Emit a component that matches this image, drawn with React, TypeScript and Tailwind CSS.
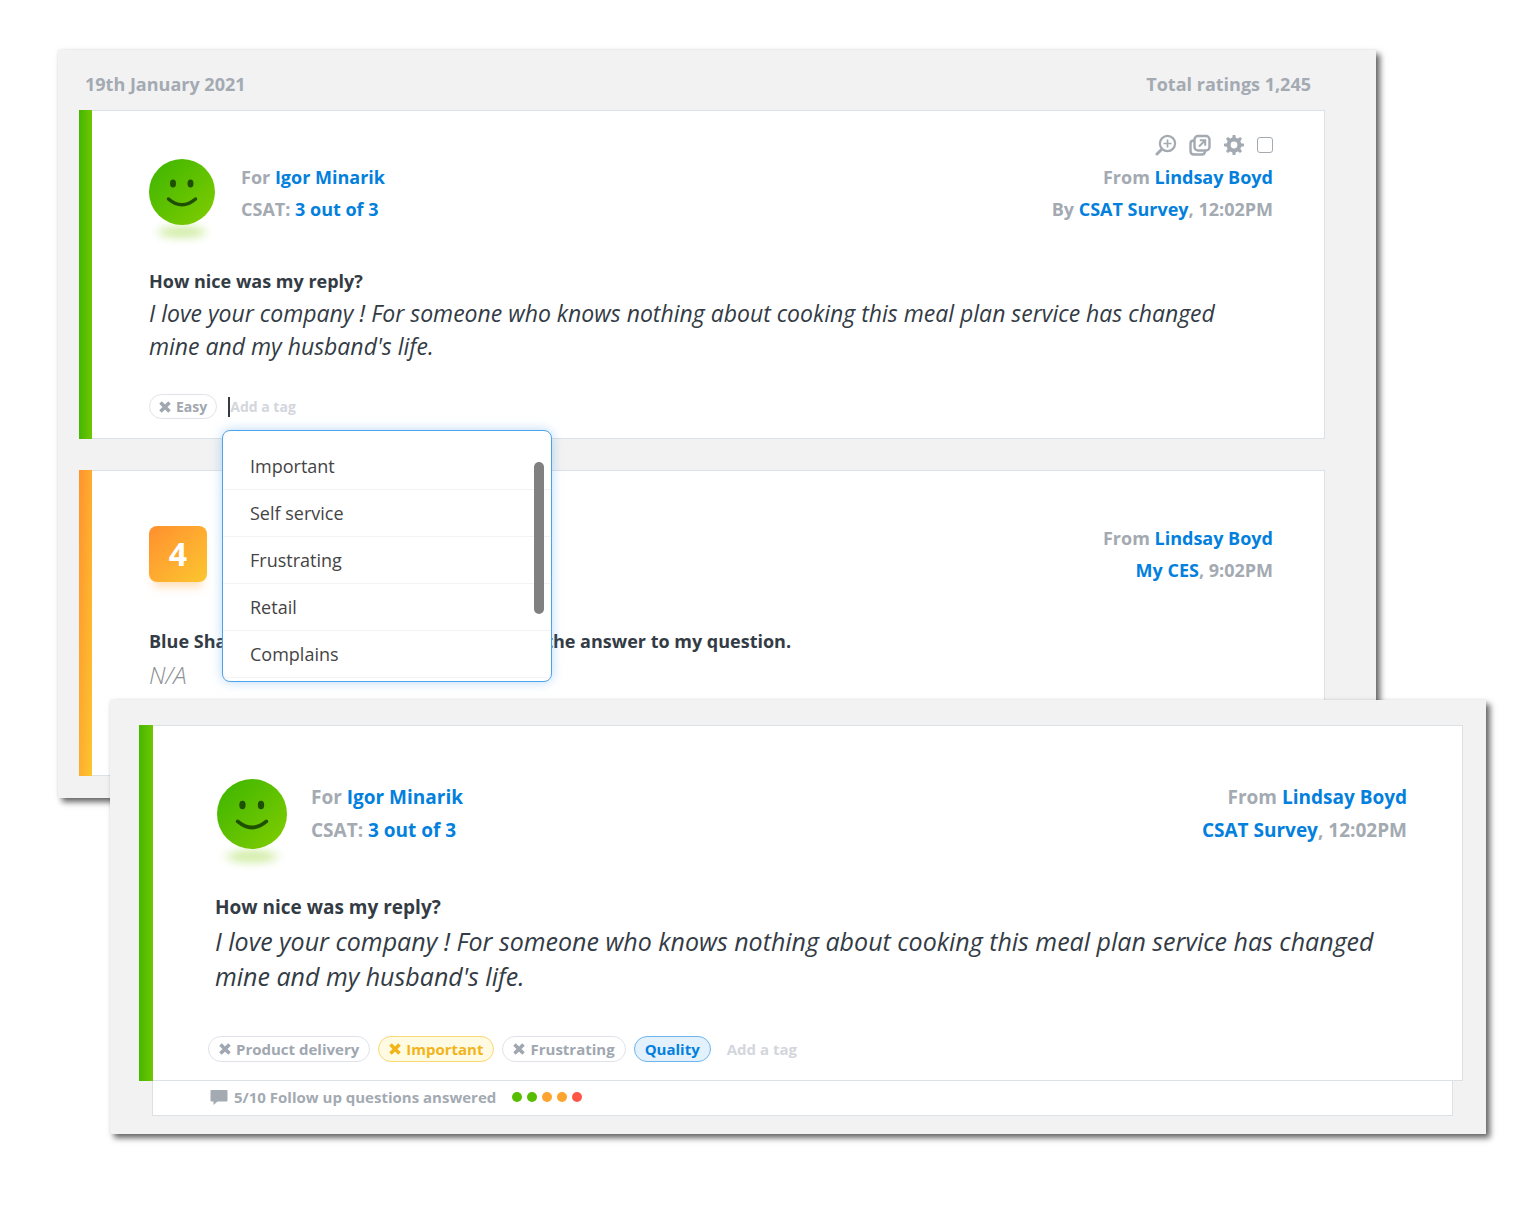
import type { ReactNode } from "react"
import clsx from "clsx"

const suggestions = ["Important", "Self service", "Frustrating", "Retail", "Complains"]

function Smiley({ id, className }: { id: string; className?: string }) {
  return (
    <svg viewBox="0 0 66 66" className={clsx("shrink-0 overflow-visible", className)} role="img" aria-label="Happy">
      <defs>
        <linearGradient id={id} x1="0.1" y1="0.1" x2="0.9" y2="0.9">
          <stop offset="0" stopColor="#43b700" />
          <stop offset="1" stopColor="#7bcb00" />
        </linearGradient>
        <filter id={`${id}-blur`} x="-50%" y="-150%" width="200%" height="400%">
          <feGaussianBlur stdDeviation="5 4" />
        </filter>
      </defs>
      <ellipse cx="33" cy="73" rx="24" ry="6" fill="#7bcb00" opacity="0.34" filter={`url(#${id}-blur)`} />
      <circle cx="33" cy="33" r="33" fill={`url(#${id})`} />
      <ellipse cx="24" cy="24.500" rx="3" ry="4" fill="#1f4f00" />
      <ellipse cx="41.500" cy="24.500" rx="3" ry="4" fill="#1f4f00" />
      <path d="M19.500 40 Q33 51.500 46.500 40" fill="none" stroke="#1f4f00" strokeWidth="3.500" strokeLinecap="round" />
    </svg>
  )
}

function ZoomIcon() {
  return (
    <svg viewBox="0 0 22 22" className="size-[22px]" fill="none" stroke="currentColor">
      <circle cx="12.500" cy="9.500" r="7.600" strokeWidth="2.200" />
      <path d="M12.500 5.500v8M8.500 9.500h8" strokeWidth="1.700" />
      <path d="M6.500 15.500L2 20" strokeWidth="3" strokeLinecap="round" />
    </svg>
  )
}

function OpenIcon() {
  return (
    <svg viewBox="0 0 22 22" className="size-[22px]" fill="none" stroke="currentColor" strokeWidth="2.400">
      <rect x="5.500" y="2" width="15" height="14.500" rx="3.500" />
      <path d="M5 6.500C2.500 6.500 1.500 7.500 1.500 9.500V17c0 2.200 1.300 3.500 3.500 3.500h8c2 0 3-1.300 3-3.500" />
      <path d="M10 12.500L15.500 7M10.800 6.300h5.400v5.400" strokeWidth="2" />
    </svg>
  )
}

function GearIcon() {
  return (
    <svg viewBox="0 0 22 22" className="size-[22px]" fill="currentColor">
      <circle cx="11" cy="11" r="5.400" fill="none" stroke="currentColor" strokeWidth="4" />
      {[0, 45, 90, 135, 180, 225, 270, 315].map((angle) => (
        <path key={angle} d="M9 5L9.700 1h2.600L13 5z" transform={`rotate(${angle} 11 11)`} />
      ))}
    </svg>
  )
}

function CrossIcon() {
  return (
    <svg viewBox="0 0 12 12" className="size-3" fill="none" stroke="currentColor" strokeWidth="3.600">
      <path d="M1.500 1.500L10.500 10.500M10.500 1.500L1.500 10.500" />
    </svg>
  )
}

function CommentIcon() {
  return (
    <svg viewBox="0 0 18 16" className="h-4 w-[18px]" fill="currentColor">
      <path d="M1.500 1h15a1 1 0 0 1 1 1v9.500a1 1 0 0 1-1 1H7.500L3.500 16v-3.500h-2a1 1 0 0 1-1-1V2a1 1 0 0 1 1-1z" />
    </svg>
  )
}

function Tag({ children, tone = "gray", large, removable = true }: { children: ReactNode; tone?: "gray" | "yellow" | "blue"; large?: boolean; removable?: boolean }) {
  return (
    <button
      type="button"
      className={clsx(
        "flex items-center gap-[5px] rounded-full border font-bold",
        large ? "h-[26px] px-[10px] text-[15px]" : "h-[25px] px-[9px] text-sm",
        tone === "gray" && "border-[#dfe3e9] bg-white text-[#a0a7b0]",
        tone === "yellow" && "border-[#fad873] bg-[#fffbe3] text-[#f2b41b]",
        tone === "blue" && "border-[#6db5ee] bg-[#e2f1fc] text-[#0380dd]",
      )}
    >
      {removable && <CrossIcon />}
      {children}
    </button>
  )
}

function Link({ children }: { children: ReactNode }) {
  return (
    <a href="#" className="text-[#0380dd]">
      {children}
    </a>
  )
}

export default function App() {
  return (
    <main className="bg-white pt-[50px] pb-[98px] font-['Open_Sans',sans-serif] text-[#333b45]">
      <section className="mr-[148px] ml-[58px] bg-[#f2f2f2] pr-[51px] pb-[22px] pl-[21px] shadow-[4px_4px_6px_rgba(0,0,0,0.6),0_0_3px_rgba(0,0,0,0.08)]">
        <header className="flex h-[60px] items-center justify-between pt-2 pr-[14px] pl-[6px] text-lg font-bold text-[#a3aab2]">
          <h2>19th January 2021</h2>
          <p>Total ratings 1,245</p>
        </header>

        <article className="flex border-y border-r border-[#dce1e6] bg-white">
          <div className="-my-px w-[13px] shrink-0 bg-linear-to-r from-[#43b700] to-[#6fc600]" />
          <div className="flex-1 pt-[23px] pr-[51px] pb-[19px] pl-[57px]">
            <div className="flex items-end justify-between text-lg leading-8 font-bold text-[#a3aab2]">
              <div className="flex items-end gap-[26px]">
                <Smiley id="smiley-main" className="size-[66px]" />
                <div>
                  <p>For <Link>Igor Minarik</Link></p>
                  <p>CSAT: <Link>3 out of 3</Link></p>
                </div>
              </div>
              <div className="text-right">
                <div className="mb-[5px] flex items-center justify-end gap-3">
                  <button type="button" aria-label="Zoom in"><ZoomIcon /></button>
                  <button type="button" aria-label="Open"><OpenIcon /></button>
                  <button type="button" aria-label="Settings"><GearIcon /></button>
                  <input type="checkbox" aria-label="Select rating" className="size-4 appearance-none rounded-[3px] border border-[#a3aab2]" />
                </div>
                <p>From <Link>Lindsay Boyd</Link></p>
                <p>By <Link>CSAT Survey</Link>, 12:02PM</p>
              </div>
            </div>

            <h3 className="mt-11 text-lg leading-6 font-bold">How nice was my reply?</h3>
            <p className="mt-1 pr-8 text-[23px] leading-[33px] italic">
              I love your company ! For someone who knows nothing about cooking this meal plan service has changed mine and my husband's life.
            </p>

            <div className="relative mt-[31px] flex items-center gap-[11px]">
              <Tag>Easy</Tag>
              <input
                aria-label="Tag"
                placeholder="Add a tag"
                className="h-5 w-40 border-l-2 border-[#333b45] text-sm font-bold outline-none placeholder:text-[#d3d6dc]"
              />
              <ul className="absolute top-9 left-[73px] z-10 h-[252px] w-[330px] overflow-hidden rounded-lg border border-[#4fa3ea] bg-white pt-3 text-lg text-[#444] shadow-[0_0_12px_rgba(80,160,235,0.4)]">
                {suggestions.map((name) => (
                  <li key={name} className="border-b border-[#f2f3f4] last:border-0">
                    <button type="button" className="block h-[46px] w-full pl-[27px] text-left">{name}</button>
                  </li>
                ))}
                <li aria-hidden="true" className="absolute top-[31px] right-[7px] h-[152px] w-[10px] rounded-full bg-[#808080]" />
              </ul>
            </div>
          </div>
        </article>

        <article className="mt-[31px] flex border-y border-r border-[#dce1e6] bg-white">
          <div className="-my-px w-[13px] shrink-0 bg-linear-to-br from-[#ff922e] to-[#fbc62f]" />
          <div className="flex-1 pt-[51px] pr-[51px] pb-[84px] pl-[57px]">
            <div className="flex items-center justify-between text-lg leading-8 font-bold text-[#a3aab2]">
              <div className="flex h-14 w-[58px] items-center justify-center rounded-lg bg-linear-to-br from-[#ff8f2f] to-[#fbc62f] text-[32px] font-bold text-white shadow-[0_10px_10px_-5px_rgba(255,160,50,0.35)]">
                4
              </div>
              <div className="text-right">
                <p>From <Link>Lindsay Boyd</Link></p>
                <p><Link>My CES</Link>, 9:02PM</p>
              </div>
            </div>
            <h3 className="mt-[43px] text-lg leading-6 font-bold">Blue Shark have made it easy for me to find the answer to my question.</h3>
            <p className="mt-[5px] text-2xl leading-[33px] font-light text-[#8c9094] italic">N/A</p>
          </div>
        </article>
      </section>

      <section className="relative z-20 -mt-[98px] mr-[38px] ml-[110px] bg-[#f2f2f2] pt-[25px] pr-[23px] pb-[18px] pl-[29px] shadow-[4px_4px_6px_rgba(0,0,0,0.6),0_0_3px_rgba(0,0,0,0.08)]">
        <article className="flex border-y border-r border-[#dce1e6] bg-white">
          <div className="-my-px w-[14px] shrink-0 bg-linear-to-r from-[#43b700] to-[#6fc600]" />
          <div className="flex-1 pt-[53px] pr-[55px] pb-[18px] pl-[62px]">
            <div className="flex items-center justify-between text-[19px] leading-[33px] font-bold text-[#a3aab2]">
              <div className="flex items-center gap-6 pl-[2px]">
                <Smiley id="smiley-front" className="size-[70px]" />
                <div>
                  <p>For <Link>Igor Minarik</Link></p>
                  <p>CSAT: <Link>3 out of 3</Link></p>
                </div>
              </div>
              <div className="text-right">
                <p>From <Link>Lindsay Boyd</Link></p>
                <p><Link>CSAT Survey</Link>, 12:02PM</p>
              </div>
            </div>

            <h3 className="mt-[46px] text-[19px] leading-6 font-bold">How nice was my reply?</h3>
            <p className="mt-[5px] text-[25px] leading-[35px] italic">
              I love your company ! For someone who knows nothing about cooking this meal plan service has changed mine and my husband's life.
            </p>

            <div className="mt-[42px] -ml-[7px] flex items-center gap-2">
              <Tag large>Product delivery</Tag>
              <Tag large tone="yellow">Important</Tag>
              <Tag large>Frustrating</Tag>
              <Tag large tone="blue" removable={false}>Quality</Tag>
              <input
                aria-label="Add a tag"
                placeholder="Add a tag"
                className="ml-2 h-[26px] w-40 text-[15px] font-bold outline-none placeholder:text-[#d3d6dc]"
              />
            </div>
          </div>
        </article>
        <footer className="mr-[10px] ml-[13px] flex h-[35px] items-center border-x border-b border-[#dce1e6] bg-white pb-[2px] pl-[57px] text-[15px] font-bold text-[#a3aab2]">
          <CommentIcon />
          <p className="ml-[6px]">5/10 Follow up questions answered</p>
          <div className="ml-4 flex gap-[5px]">
            <span className="size-[10px] rounded-full bg-[#56bd00]" />
            <span className="size-[10px] rounded-full bg-[#56bd00]" />
            <span className="size-[10px] rounded-full bg-[#fda32f]" />
            <span className="size-[10px] rounded-full bg-[#fda32f]" />
            <span className="size-[10px] rounded-full bg-[#ff5546]" />
          </div>
        </footer>
      </section>
    </main>
  )
}
